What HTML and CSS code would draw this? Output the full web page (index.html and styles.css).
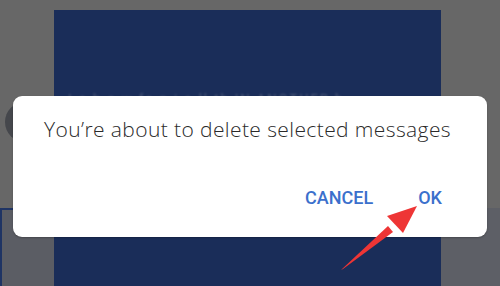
FILE: index.html
```html
<!DOCTYPE html>
<html>
<head>
<meta charset="utf-8">
<link rel="stylesheet" href="styles.css">
</head>
<body>
<div class="screen">
  <div class="cell gap-top"></div>
  <div class="cell side-left"></div>
  <div class="panel">
    <div class="panel-text">I a h a w fa n i a ll th IN ANOTHER b</div>
  </div>
  <div class="cell side-right"></div>
  <div class="cell foot-left"></div>
  <div class="cell foot-right"></div>
</div>
<div class="avatar"></div>
<div class="dialog">
  <p class="message">You’re about to delete selected messages</p>
  <div class="actions">
    <button class="btn">CANCEL</button>
    <button class="btn">OK</button>
  </div>
</div>
<svg class="arrow" width="90" height="75" viewBox="0 0 90 75">
  <polygon points="0,75 47,31 52,37 2,74" fill="#ee3535"/>
  <polygon points="76,11 46,21 62,38" fill="#ee3535"/>
</svg>
</body>
</html>
```
FILE: styles.css
```css
html, body {
  margin: 0;
  padding: 0;
}
body {
  width: 500px;
  height: 286px;
  overflow: hidden;
  position: relative;
  background: #676767;
  font-family: "Roboto", "Liberation Sans", sans-serif;
}
.screen {
  display: grid;
  grid-template-columns: 54px 387px 59px;
  grid-template-rows: 10px 198px 78px;
  height: 286px;
}
.gap-top { grid-column: 1 / 4; grid-row: 1; }
.side-left { grid-column: 1; grid-row: 2; }
.side-right { grid-column: 3; grid-row: 2; }
.panel {
  grid-column: 2;
  grid-row: 2 / 4;
  background: #1a2d59;
  display: flex;
  flex-direction: column;
  justify-content: flex-start;
}
.panel-text {
  margin-top: 81px;
  padding-left: 14px;
  color: #4d5978;
  font-size: 13px;
  letter-spacing: 2px;
  filter: blur(1px);
  white-space: nowrap;
}
.foot-left {
  grid-column: 1;
  grid-row: 3;
  background: #5b5d64;
  border-top: 2px solid #1f3464;
  border-left: 2px solid #1f3464;
}
.foot-right {
  grid-column: 3;
  grid-row: 3;
  background: #5d5f66;
}
.avatar {
  position: absolute;
  left: 5px;
  top: 102px;
  width: 40px;
  height: 40px;
  border-radius: 50%;
  background: #45474c;
}
.dialog {
  position: absolute;
  left: 13px;
  top: 96px;
  width: 474px;
  height: 141px;
  box-sizing: border-box;
  background: #ffffff;
  border-radius: 9px;
  box-shadow: 0 1px 2px rgba(0,0,0,0.25);
  display: flex;
  flex-direction: column;
  padding: 19px 10px 0 31px;
}
.message {
  margin: 0;
  font-family: "Open Sans", "Liberation Sans", sans-serif;
  font-weight: 300;
  font-size: 21px;
  line-height: 28px;
  letter-spacing: 0.4px;
  color: #2a2a2a;
  white-space: nowrap;
}
.actions {
  display: flex;
  justify-content: flex-end;
  gap: 45px;
  margin-top: 44px;
  padding-right: 35px;
}
.btn {
  border: 0;
  background: none;
  padding: 0;
  font-family: "Roboto", "Liberation Sans", sans-serif;
  font-weight: 500;
  font-size: 18px;
  line-height: 22px;
  color: #3b70cc;
}
.arrow {
  position: absolute;
  left: 341px;
  top: 195px;
}
```
